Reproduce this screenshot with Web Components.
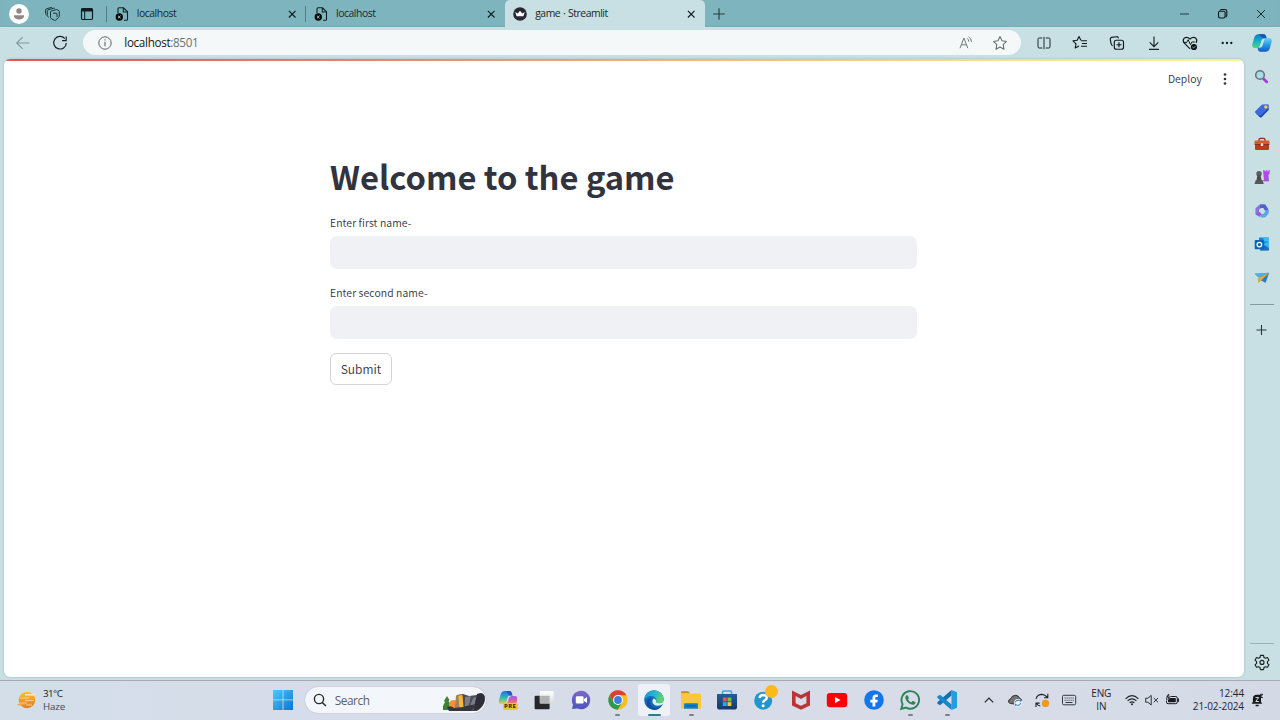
<!DOCTYPE html>
<html lang="en">
<head>
<meta charset="utf-8">
<title>game · Streamlit</title>
<style>
  html, body { margin: 0; height: 100%; overflow: hidden; }
  body { font-family: "Open Sans", "Noto Sans", sans-serif; color: #1b1b1b; }
</style>
</head>
<body>
<desktop-screen></desktop-screen>
<script>
const ICONS = {
  avatar: `<circle cx="10" cy="10" r="10" fill="#fdfdfd"/><circle cx="10" cy="7" r="2.7" fill="#8f8785"/><path d="M5 11.2h10v1.1c0 2-2.2 3.1-5 3.1s-5-1.1-5-3.1z" fill="#8f8785"/>`,
  spaces: `<g fill="none" stroke="#17363b" stroke-width="1" stroke-linejoin="round"><path d="M7.500 8.100q0-.8.700-1l4.800-1.500q.6-.2 1.200.1l1.600.9q.5.300.5.900v4.600q0 .6-.4 1l-3.300 3.100q-.6.500-1.200.1l-3.400-1.900q-.5-.3-.5-.9z"/><path d="M5.700 13.200l-.9-.6q-.5-.4-.5-1V6.900q0-.8.700-1l5.700-1.700q.7-.2 1.300.4M3.500 11l-.6-.5q-.3-.3-.3-.8V5.800q0-.7.700-.9L8 3.500q.6-.1 1.100.2M10 9.200h3.200q.8 0 .8.800v3"/></g>`,
  tabmenu: `<rect x="4.5" y="4.5" width="11" height="11" rx="1.2" fill="none" stroke="#0c1d20" stroke-width="1.2"/><path d="M4.5 4.5h11v3h-11z" fill="#0c1d20"/><path d="M7.7 7v8.5" stroke="#0c1d20"/>`,
  pageerr: `<path d="M6 9V4.800q0-1 1-1h4.500l4 4v7.400q0 1-1 1h-2.500" fill="none" stroke="#0d2226" stroke-width="1.1"/><path d="M11.300 4v4h4" fill="none" stroke="#0d2226" stroke-width="1.1"/><circle cx="7.300" cy="13" r="3.700" fill="#050708"/><path d="M6.100 11.800l2.400 2.400m0-2.400l-2.400 2.400" stroke="#b9d6da" stroke-width="1"/>`,
  crown: `<circle cx="10" cy="10" r="6.8" fill="#262733"/><path d="M5.2 8l2.5 1.6L10 6.8l2.3 2.8L14.8 8l-1.4 4.3H6.6z" fill="#fff"/>`,
  close: `<path d="M6.900 6.900l6.600 6.600m0-6.600l-6.600 6.600" stroke="#0e1c1f" stroke-width="1.15"/>`,
  winclose: `<path d="M6 6l8 8m0-8l-8 8" stroke="#172c30" stroke-width="1"/>`,
  min: `<path d="M6 10h9" stroke="#213f44"/>`,
  restore: `<rect x="5.500" y="7.200" width="6.600" height="6.800" rx="1.400" fill="none" stroke="#0b1517" stroke-width="1.100"/><path d="M7 6.700q.2-1.200 1.500-1.200h3.500q1.800 0 1.800 1.800v4q0 1.300-1.200 1.500" fill="none" stroke="#0b1517" stroke-width="1.100"/>`,
  plus: `<path d="M10 4.3v11.4M4.3 10h11.4" stroke="#203b40" stroke-width="1.1"/>`,
  plussm: `<path d="M9.5 5v10M4.500 10h10" stroke="#26383b" stroke-width="1.1"/>`,
  back: `<path d="M16.5 10H4m5.600-5.800L3.700 10l5.900 5.800" fill="none" stroke="#82989b" stroke-width="1.1"/>`,
  reload: `<path d="M14.8 5.6A6.3 6.3 0 1 0 16.3 10M16.2 3.6v4H12" fill="none" stroke="#1a2224" stroke-width="1.2"/>`,
  info: `<circle cx="10" cy="10" r="6.2" fill="none" stroke="#5b6668"/><path d="M10 8.8v4.5M10 6.3v1.3" stroke="#5b6668" stroke-width="1.1"/>`,
  read: `<path d="M4 15.2L7.900 5l3.900 10.200M5.400 11.800h5" fill="none" stroke="#70797b"/><path d="M11 5.300q1.800 1.200 1.800 3.400M12.600 3.900q2.900 1.700 2.900 5" fill="none" stroke="#70797b"/>`,
  star: `<path d="M10 3.6l2 4.2 4.5.6-3.3 3.2.8 4.6-4-2.2-4 2.200.8-4.600-3.300-3.200 4.500-.6z" fill="none" stroke="#646e70" stroke-width="1.05" stroke-linejoin="round"/>`,
  split: `<path d="M8.300 5H5.200Q4 5 4 6.200v7.600Q4 15 5.200 15h3.100M11.700 5h3.100Q16 5 16 6.200v7.600q0 1.200-1.200 1.200h-3.100M10 3.800v12.400" fill="none" stroke="#1d2b2e"/>`,
  favs: `<path d="M9 13l-3.800 2 .8-4.200-3-3 4.200-.6L9 3.600l1.900 3.600" fill="none" stroke="#101a1c" stroke-width="1.15" stroke-linejoin="round"/><path d="M11 7.700h6M12 10.500h5M11 13.300h6" stroke="#101a1c" stroke-width="1.1"/>`,
  collect: `<rect x="7.3" y="7.2" width="9.2" height="9" rx="2" fill="none" stroke="#101a1c" stroke-width="1.15"/><path d="M12 9.2v5M9.5 11.7h5M5.6 12.8Q4.3 12 4 10.4L3.3 6.3Q3 4.8 4.6 4.4L9.5 3.7q1.6-.2 2 1.6" fill="none" stroke="#101a1c" stroke-width="1.15"/>`,
  down: `<path d="M10 3.5v10M5.7 9.4L10 13.6l4.3-4.2M5 16.4h10" fill="none" stroke="#182326" stroke-width="1.15"/>`,
  heart: `<path d="M10 15.8L4.2 10Q2.4 7.5 4 5.4 6.8 3 10 6q3.2-3 6-.6 1.6 2.1 0 4.4" fill="none" stroke="#101a1c" stroke-width="1.15"/><path d="M3.300 9.500h3.400l1.500-2.800 2.200 5 1.500-2.700h3" fill="none" stroke="#101a1c"/><circle cx="13.900" cy="14" r="3.100" fill="#080d0e"/><path d="M12.400 14l1.100 1.100 2-2" fill="none" stroke="#c8dfe2" stroke-width=".8"/>`,
  more: `<g fill="#101718"><circle cx="5.7" cy="10" r="1.15"/><circle cx="10" cy="10" r="1.15"/><circle cx="14.3" cy="10" r="1.15"/></g>`,
  copilot: `<defs><linearGradient id="a" x2="0" y2="1"><stop stop-color="#1277c9"/><stop offset=".5" stop-color="#12b3c4"/><stop offset="1" stop-color="#4fd47c"/></linearGradient><linearGradient id="b" x2="0" y2="1"><stop stop-color="#6fd2f4"/><stop offset=".5" stop-color="#259be5"/><stop offset="1" stop-color="#1456c8"/></linearGradient></defs><path d="M6.2 1.2h5.6q1.6 0 2.2 2l.5 2h-2.3q-2 0-2.6 2L7.8 13q-.5 2-2.4 2H2.6Q-.2 15 .3 11.6L2.4 4q1-2.8 3.8-2.8z" fill="url(#a)"/><path d="M13.8 18.8H8.2q-1.6 0-2.2-2l-.5-2h2.3q2 0 2.6-2L12.2 7q.5-2 2.4-2h2.8q2.8 0 2.3 3.4L17.6 16q-1 2.8-3.8 2.8z" fill="url(#b)"/><path d="M6.5 1.2h5.3q1.6 0 2.2 2l.5 2H11z" fill="#1457b5"/>`,
  search3d: `<path d="M11.5 11.800l3.300 3.100" stroke="#a13be0" stroke-width="2.700" stroke-linecap="round"/><circle cx="8" cy="8" r="4.300" fill="#a9dce9" stroke="#66727c" stroke-width="1.600"/>`,
  tag: `<path d="M10 3.6l5.5-.4q1.3 0 1.3 1.3L16.5 9l-6.8 7q-1 .8-2 0L3.4 12q-.8-1 0-2z" fill="#3d6bdd"/><path d="M3.4 12l4.3 4q1 .8 2 0l6.8-7 .1-2-7.9 7.4q-1 .7-1.8 0z" fill="#2445a8"/><circle cx="13.8" cy="6" r="1.7" fill="#f4ca62"/>`,
  box: `<path d="M7 7V5.400Q7 4.400 8.400 4.400h3.200Q13 4.400 13 5.400V7" fill="none" stroke="#8d3320" stroke-width="1.300"/><rect x="2.500" y="6.500" width="15" height="5" rx="1.400" fill="#e1572d"/><path d="M3 10.500h14v4.300q0 1.200-1.200 1.200H4.200q-1.200 0-1.200-1.200z" fill="#b63c1e"/><path d="M2.800 10h14.400v1H2.800z" fill="#8f2e18"/><rect x="8.800" y="9.300" width="2.400" height="2.600" rx=".6" fill="#f6e4dc"/>`,
  chess: `<path d="M11 3.2h1.800v1.300h1V3.200h1.600v1.300h1V3.200H18l-.6 4-1 .6.500 5.200H12z" fill="#b04be6"/><circle cx="7" cy="6.800" r="2.700" fill="#5d5e60"/><path d="M5.500 8h3l1.200 6H4.300z" fill="#4a4b4d"/><path d="M3.800 13h6.600l1.400 4H2.500z" fill="#55575a"/><path d="M11 13.200h6v1.100h-5.600z" fill="#8c2fc5"/>`,
  m365: `<g fill="none" stroke-width="3.600" stroke-linejoin="round"><path d="M8.300 14.300L5.200 12.400V8L8.600 5.100" stroke="#8a72e0"/><path d="M8 5.100h4.300L15 9.500" stroke="#4f63c9"/><path d="M15 9v2.500l-2.600 3.200H8.500" stroke="#58a6e6"/><path d="M5.300 11.500l3.200 2.800" stroke="#9a5bd2"/></g>`,
  outlook: `<path d="M7 3.500h9.500v9H7z" fill="#1587d6"/><path d="M11.500 3.500h5v4h-5z" fill="#3bbcf4"/><path d="M7 10.500l10-2.600v7.600q0 1-1 1H8z" fill="#47b3ec"/><path d="M8 16.500h8q1 0 1-1V14l-5.500-3.200z" fill="#1970bd"/><rect x="2.700" y="6" width="9.500" height="9.300" rx="1" fill="#0b64b2"/><circle cx="7.400" cy="10.600" r="2.300" fill="none" stroke="#fff" stroke-width="1.300"/>`,
  plane: `<path d="M2.700 5.800L17 4.800l-7.200 6.700z" fill="#3c90cf"/><path d="M2.700 5.800L17 4.800 6.300 9.500z" fill="#54aede"/><path d="M17 4.800L5.800 10.300l.4 5 3-2.700 4.400 2.200z" fill="#e4a93b"/><path d="M17 4.800l-7.800 7.700 4.400 2.300z" fill="#277ebf"/>`,
  gear: `<path d="M8.500 3.400h3l.5 2.100 1.400.8 2.100-.7 1.500 2.600-1.600 1.400v1.700l1.600 1.500-1.500 2.500-2.100-.6-1.400.8-.5 2.100h-3L8 15.500l-1.400-.8-2.100.6L3 12.800l1.600-1.500V9.600L3 8.200l1.500-2.600 2.100.7L8 5.500z" fill="none" stroke="#182022" stroke-width="1.1" stroke-linejoin="round"/><circle cx="10" cy="10.400" r="2" fill="none" stroke="#182022" stroke-width="1.1"/>`,
  kebab: `<g fill="#31333f"><circle cx="10" cy="5.500" r="1.350"/><circle cx="10" cy="10" r="1.350"/><circle cx="10" cy="14.500" r="1.350"/></g>`,
  haze: `<defs><linearGradient id="a" x2="0" y2="1"><stop stop-color="#fdc426"/><stop offset="1" stop-color="#e4781d"/></linearGradient></defs><circle cx="10" cy="10" r="8.300" fill="url(#a)"/><path d="M8 4.800h10" stroke="#f6e6b8" stroke-width="1.600"/><path d="M3 8h9M8 10.500h9M2.500 13h7.500M9 15h6" stroke="#fbe3a6" stroke-width=".8"/><path d="M.5 14.700H8" stroke="#eea53b" stroke-width="1.200"/>`,
  start: `<defs><linearGradient id="a" x2="1" y2="1"><stop stop-color="#4ecbf8"/><stop offset="1" stop-color="#0874d5"/></linearGradient></defs><path d="M0 0h9.600v9.500H0zM10.400 0H20v9.500h-9.600zM0 10.300h9.600V20H0zM10.400 10.300H20V20h-9.600z" fill="url(#a)"/>`,
  find: `<circle cx="9" cy="9" r="4.600" fill="none" stroke="#262a31" stroke-width="1.400"/><path d="M12.300 12.400l3.600 3.700" stroke="#262a31" stroke-width="1.500"/>`,
  pre: `<defs><linearGradient id="a" x2="0" y2="1"><stop stop-color="#2872dd"/><stop offset=".5" stop-color="#2ab7bd"/><stop offset="1" stop-color="#e8cf43"/></linearGradient><linearGradient id="b" x2="0" y2="1"><stop stop-color="#9b63e8"/><stop offset=".5" stop-color="#e45ca2"/><stop offset="1" stop-color="#f39b55"/></linearGradient></defs><path d="M6.300 1h5q2 0 2.600 2.400l.6 2H12q-1.800 0-2.400 2l-1.200 4Q7.800 14 5.600 14H2.800Q0 14 .8 11L2.900 3.600Q3.700 1 6.300 1z" fill="url(#a)"/><path d="M7 14q2 0 2.700-2L11 8q.7-2 2.600-2h3.200q3 0 2.400 3l-1 6H8z" fill="url(#b)"/><path d="M8 1h3.300q2 0 2.600 2.400l.6 2h-3.200z" fill="#2756c8"/>`,
  taskview: `<defs><linearGradient id="a" x2="0" y2="1"><stop stop-color="#fff"/><stop offset="1" stop-color="#d7dbe2"/></linearGradient></defs><rect x=".6" y="5.800" width="15" height="13.500" rx="1" fill="#252729"/><rect x="5.800" y="1" width="14" height="12.500" rx="1" fill="url(#a)"/><path d="M5.800 5.800h9.800v7.700H5.800z" fill="#b2b3b5"/>`,
  chat: `<defs><linearGradient id="a" x2="0" y2="1"><stop stop-color="#7d68c8"/><stop offset="1" stop-color="#4b55bd"/></linearGradient></defs><path d="M1 19l1-4.500A9.200 9.200 0 1 1 6.500 18.500z" fill="url(#a)"/><rect x="4.800" y="6.300" width="7.800" height="7.300" rx="1.300" fill="#fff"/><path d="M13 9l3-2v6l-3-2z" fill="#fff"/>`,
  chrome: `<circle cx="10" cy="10" r="9.700" fill="#f5bf22"/><path d="M1.600 5.150A9.700 9.700 0 0 1 18.400 5.150H10L5.800 12.400z" fill="#d94235"/><path d="M1.600 5.150A9.700 9.700 0 0 0 9.600 19.700L14.200 12.500 10 14.800 5.800 12.400z" fill="#2c9a50"/><circle cx="10" cy="10" r="4.900" fill="#fff"/><circle cx="10" cy="10" r="3.900" fill="#3c7de4"/>`,
  edge: `<defs><linearGradient id="a" x1="0" x2="1" y2=".3"><stop stop-color="#1b91d6"/><stop offset=".55" stop-color="#25b6d0"/><stop offset="1" stop-color="#60d266"/></linearGradient></defs><circle cx="10" cy="10" r="9.800" fill="#116abd"/><path d="M.3 9A9.800 9.800 0 0 1 19.800 9q.2 4-4.600 4.300-4 0-3.300-1.700.8-1 .3-2.600Q11 6.300 7.500 6 2.600 6 .3 10z" fill="url(#a)"/><path d="M7.700 8Q4 12.500 8 16.500q4 3 9.400-.5-4 5.500-10 3.200Q1 16.300 3 10.800 4.500 8 7.700 8z" fill="#174f96"/><path d="M9.800 8.300Q7.500 11 9 13.500q2.500 3.500 8.200 1.500l3-1.700-.2-2.600q-1.300 2.600-4.800 2.600-4 0-3.300-1.700 1-1.500-2.100-3.300z" fill="#d9f1f8"/>`,
  folder: `<path d="M0 2q0-.8.800-.8h6q.8 0 1.300.8L9 3.600H0z" fill="#c98c14"/><path d="M0 4.500V3.400h19.200q.8 0 .8.800v13.600q0 .9-1 .9H1q-1 0-1-1z" fill="#fac73f"/><path d="M3 18.700v-4.500q0-1 1-1h12q1 0 1 1v4.500z" fill="#1480c7"/><path d="M5.300 15.500h9.400v1H5.300z" fill="#075d96"/>`,
  store: `<defs><linearGradient id="a" x2="0" y2="1"><stop stop-color="#1e5f9f"/><stop offset="1" stop-color="#173767"/></linearGradient></defs><path d="M5.500 4V2q0-1 1-1h7q1 0 1 1v2" fill="none" stroke="#3aa9df" stroke-width="1.500"/><path d="M0 4h20v13q0 2.600-2.600 2.600H2.600Q0 19.600 0 17z" fill="url(#a)"/><path d="M5.800 7.500h3.900v3.900H5.800z" fill="#ef5838"/><path d="M10.500 7.500h3.900v3.900h-3.900z" fill="#84bd35"/><path d="M5.800 12.100h3.900V16H5.800z" fill="#29a8e8"/><path d="M10.500 12.100h3.900V16h-3.900z" fill="#f8c332"/>`,
  help: `<circle cx="9.200" cy="10.700" r="9" fill="#2295cb"/><path d="M5.600 8.100q.2-3.100 3.700-3.100 3.700.2 3.400 3-.2 1.700-2.300 2.600-1.200.7-1.200 2.200" fill="none" stroke="#fff" stroke-width="2.400"/><circle cx="9.100" cy="15.800" r="1.500" fill="#fff"/>`,
  mcafee: `<path d="M1 .5L10 5l9-4.500v15L10 19.700 1 15.500zM4.600 6v7.300l5.400 2.500 5.400-2.500V6L10 8.900z" fill="#b93635" fill-rule="evenodd"/>`,
  youtube: `<rect x="-.2" y="3" width="20.400" height="14.300" rx="3.200" fill="#fa0305"/><path d="M8 7l5.500 3.100L8 13.300z" fill="#fff"/>`,
  facebook: `<circle cx="10" cy="10" r="9.800" fill="#1476ef"/><path d="M8.500 16.500v-4H6.300V9.700h2.200V8q0-3.600 3.300-3.600l2.100.2V7h-1.300q-1.300 0-1.300 1.300v1.400h2.500l-.5 2.800h-2v4z" fill="#fff"/>`,
  whatsapp: `<path d="M1.200 18.900l1.400-4.700A8.800 8.800 0 1 1 6 17.600z" fill="none" stroke="#2d8357" stroke-width="1.900"/><path d="M6.200 5.600q.9-1 1.700.1l.9 2q.1.600-.8 1.500 1 2.200 3.300 3.200l1-1.200q.4-.4.900-.1l2 1q.5.300.2 1.100-.7 1.800-2.600 1.600-5.800-1-7.500-6.700-.1-1.400.9-2.500z" fill="#2d8357"/>`,
  vscode: `<path d="M14.500 0L20 2.300v15.400L14.500 20z" fill="#279cdf"/><path d="M14.500 0v5.500L3 15.300.3 13.600v-1.300z" fill="#1270b2"/><path d="M14.500 20v-5.500L3 4.700.3 6.400v1.300z" fill="#1687cb"/>`,
  chevron: `<path d="M5.800 12.300L10 8l4.200 4.300" fill="none" stroke="#20242a" stroke-width="1.200"/>`,
  cloud: `<path d="M5.800 13.500q-2.500-.3-2.300-2.500.3-1.700 1.900-2Q7 5.200 10.800 5.300q2.800.2 3.800 2.900 1.500.4 2 2.200L9 14z" fill="#747474" stroke="#303030"/><circle cx="13" cy="12.800" r="3.900" fill="#eaf3fa"/><path d="M10.200 12.500q.7-2.400 3-2.300 1.300.1 2.200 1.300V9.800m.4 3.300q-.7 2.400-3 2.300-1.300-.1-2.200-1.300v1.700" fill="none" stroke="#2776ad" stroke-width="1"/>`,
  sync: `<path d="M4 8.800Q5.200 4.400 10 4.400q3.300.2 5.200 3M15.800 3.800v3.900h-3.700M8.300 16q-2.500-.5-4-2.700M4 17v-3.900h3.700" fill="none" stroke="#1f2328" stroke-width="1.100"/><circle cx="13.500" cy="13.400" r="3.700" fill="#f29820"/>`,
  keyboard: `<rect x="3.500" y="5.300" width="13.200" height="9.500" rx="1.300" fill="none" stroke="#343a43"/><path d="M5.600 8h9.200M5.600 10.200h9.200" stroke="#343a43" stroke-width="1.100" stroke-dasharray="1.100 .9"/><path d="M6.500 12.500h7" stroke="#343a43"/>`,
  wifi: `<g fill="none" stroke="#20252b" stroke-width="1.150"><path d="M3.600 8.800q6.400-6.200 12.800 0M5.600 10.900q4.400-4.200 8.800 0M7.600 12.900q2.400-2.200 4.800 0"/></g><circle cx="10" cy="14.200" r="1" fill="#20252b"/>`,
  mute: `<path d="M3.700 8.200h2.200l3.300-2.800v9.600l-3.300-2.800H3.700z" fill="none" stroke="#2b3036"/><path d="M11.700 8l4.300 4.300m0-4.300l-4.300 4.300" stroke="#2b3036"/>`,
  battery: `<rect x="4.500" y="6.500" width="10.800" height="7.200" rx="1.600" fill="none" stroke="#181b1e"/><rect x="6" y="8" width="7.800" height="4.200" rx=".6" fill="#181b1e"/><path d="M16.400 8.500v3.200" stroke="#181b1e" stroke-width="1.200"/><path d="M5.800 3.900L3.700 7.800h2L4.500 11 8.800 6.700H6.600L8 3.900z" fill="#181b1e" stroke="#d5dbe6" stroke-width=".6"/>`,
  bell: `<path d="M4.700 13.800l1.200-2V8.300Q6 4.800 9.800 4.700h4.200v7.100l1.200 2z" fill="#17191c"/><path d="M8.600 15.500h3" stroke="#17191c" stroke-width="1.500"/><path d="M8.500 7.500h3.200l-3 4h3.200" fill="none" stroke="#d5dae2"/><path d="M13.200 4.300h2.500l-2.500 3.200h2.600" fill="none" stroke="#17191c"/>`,
  scene: `<path d="M4 3l2.500 4-1 1 2.500 4v5H0v-4l2-4-1-1z" fill="#3f8131"/><path d="M6 12q0-5 5-5t5 5v6H6z" fill="#f4903b"/><path d="M14 2l6-1 6 2 8-1 4-2q4 0 4 7-1 7-8 11H12z" fill="#4b4c57"/><path d="M13 2.500l6-1v14l-7 2z" fill="#a5805a"/><path d="M15.500 3l4-1 1 13-4 2z" fill="#f5b93a"/><path d="M22 4l6-1-2 9-4 2zM30 5l5-2-2 7-6 3z" fill="#7b7c88"/><path d="M34 1q5-2 7.500 2 1 8-5.500 13l-5 1.500Q32 8 34 1z" fill="#2c2d37"/><path d="M4 14q4-2 7 1l9-1 8-2 4 1-4 5H6z" fill="#34353d"/>`
};

const define = (name, html, setup) => {
  const template = document.createElement('template');
  template.innerHTML = html;
  customElements.define(name, class extends HTMLElement {
    constructor() {
      super();
      this.attachShadow({ mode: 'open' }).append(template.content.cloneNode(true));
    }
    connectedCallback() { if (setup) setup(this, this.shadowRoot); }
  });
};

define('ui-icon', `<style>
  :host { display: block; flex: none; width: var(--s, 20px); height: var(--s, 20px); }
  svg { display: block; width: 100%; height: 100%; overflow: visible; }
</style><div></div>`, (el, root) => {
  const box = root.querySelector('div');
  box.style.height = '100%';
  const wide = el.getAttribute('name') === 'scene';
  box.innerHTML = `<svg viewBox="0 0 ${wide ? '42 19' : '20 20'}">${ICONS[el.getAttribute('name')] || ''}</svg>`;
});

define('icon-cell', `<style>
  :host { display: flex; flex: none; align-items: center; justify-content: center; width: var(--cell, 36.65px); }
</style><slot></slot>`);

define('browser-tab', `<style>
  :host { display: flex; flex: none; align-items: center; box-sizing: border-box; width: 199.2px; height: 27px;
    padding: 0 4px 0 4.500px; font-size: 10.400px; letter-spacing: -.45px; color: #152a2e; position: relative; }
  :host([divided])::before { content: ""; position: absolute; left: -1px; top: 6px; width: 1px; height: 16px; background: #4c7f87; }
  :host([active]) { background: #c8dfe3; border-radius: 5px 5px 0 0; color: #1c2527; word-spacing: .5px; }
  span { flex: 1; padding-left: 5.300px; line-height: 27px; }
</style><ui-icon></ui-icon><span><slot></slot></span><ui-icon name="close"></ui-icon>`, (el, root) => {
  const icon = root.querySelector('ui-icon');
  icon.setAttribute('name', el.getAttribute('icon'));
  icon.replaceWith(icon.cloneNode());
});

define('tab-strip', `<style>
  :host { display: flex; align-items: center; height: 27px; flex: none; background: #7eb4bd; box-shadow: inset 0 -1px 1px #6fa5ae66; }
  .lead { display: flex; width: 107px; }
  .fill { flex: 1; }
  icon-cell { --cell: 38.3px; }
  .lead icon-cell:nth-child(1) { --cell: 37px; }
  .lead icon-cell:nth-child(2) { --cell: 31px; }
  .lead icon-cell:nth-child(3) { --cell: 37px; }
  .add { --cell: 28px; }
</style>
<div class="lead"><icon-cell><ui-icon name="avatar"></ui-icon></icon-cell><icon-cell><ui-icon name="spaces"></ui-icon></icon-cell><icon-cell><ui-icon name="tabmenu"></ui-icon></icon-cell></div>
<browser-tab icon="pageerr" divided>localhost</browser-tab>
<browser-tab icon="pageerr" divided>localhost</browser-tab>
<browser-tab icon="crown" active>game · Streamlit</browser-tab>
<icon-cell class="add"><ui-icon name="plus"></ui-icon></icon-cell>
<div class="fill"></div>
<icon-cell><ui-icon name="min"></ui-icon></icon-cell><icon-cell><ui-icon name="restore"></ui-icon></icon-cell><icon-cell><ui-icon name="winclose"></ui-icon></icon-cell>`);

define('address-bar', `<style>
  :host { display: flex; align-items: center; flex: 1; height: 25px; margin: 0 4px 0 5px; border-radius: 13px; background: #f4f8f9;
    font-size: 11.7px; letter-spacing: -.33px; color: #15191a; }
  p { flex: 1; margin: 0; padding-left: 9px; line-height: 24px; height: 25px; }
  p span { color: #6b7172; }
  .info { margin-left: 12px; }
  icon-cell { --cell: 33.4px; }
  .end { display: flex; padding-right: 5px; }
</style><ui-icon class="info" name="info"></ui-icon><p>localhost<span>:8501</span></p>
<div class="end"><icon-cell><ui-icon name="read"></ui-icon></icon-cell><icon-cell><ui-icon name="star"></ui-icon></icon-cell></div>`);

define('nav-bar', `<style>
  :host { display: flex; align-items: center; box-sizing: border-box; height: 32px; flex: none; padding: 0 0 1px 5px; margin-right: -1.200px; }
</style>
<icon-cell><ui-icon name="back"></ui-icon></icon-cell><icon-cell><ui-icon name="reload"></ui-icon></icon-cell>
<address-bar></address-bar>
<icon-cell><ui-icon name="split"></ui-icon></icon-cell><icon-cell><ui-icon name="favs"></ui-icon></icon-cell><icon-cell><ui-icon name="collect"></ui-icon></icon-cell><icon-cell><ui-icon name="down"></ui-icon></icon-cell><icon-cell><ui-icon name="heart"></ui-icon></icon-cell><icon-cell><ui-icon name="more"></ui-icon></icon-cell>`);

define('side-bar', `<style>
  :host { display: flex; flex-direction: column; align-items: center; width: 36px; flex: none; box-sizing: border-box; padding: 6px 0 8px; }
  icon-cell { width: 36px; height: 33.4px; }
  .copilot { height: 20px; margin-bottom: 7.500px; }
  hr { width: 24px; height: 1px; border: 0; margin: 0; background: #9fb1b4; flex: none; }
  .first { margin-top: 9.500px; background: #869a9d; }
  .plus { height: 20px; margin-top: 15.500px; }
  .gap { flex: 1; }
  .gear { height: 20px; margin-top: 8px; }
</style>
<icon-cell class="copilot"><ui-icon name="copilot"></ui-icon></icon-cell>
<icon-cell><ui-icon name="search3d"></ui-icon></icon-cell><icon-cell><ui-icon name="tag"></ui-icon></icon-cell><icon-cell><ui-icon name="box"></ui-icon></icon-cell><icon-cell><ui-icon name="chess"></ui-icon></icon-cell><icon-cell><ui-icon name="m365"></ui-icon></icon-cell><icon-cell><ui-icon name="outlook"></ui-icon></icon-cell><icon-cell><ui-icon name="plane"></ui-icon></icon-cell>
<hr class="first"><icon-cell class="plus"><ui-icon name="plussm"></ui-icon></icon-cell>
<div class="gap"></div><hr><icon-cell class="gear"><ui-icon name="gear"></ui-icon></icon-cell>`);

define('text-field', `<style>
  :host { display: block; }
  label { display: block; height: 20px; line-height: 20px; font-size: 10.4px; letter-spacing: .1px; margin-bottom: 3px; }
  input { display: block; box-sizing: border-box; width: 100%; height: 33.400px; margin-bottom: -.4px; border: 0; border-radius: 7px; background: #f0f1f5; padding: 0 10px; outline: 0; }
</style><label><slot></slot></label><input type="text">`);

define('submit-button', `<style>
  :host { display: block; }
  button { box-sizing: border-box; display: block; width: 62px; height: 32px; padding: 0 0 1px; border: 1px solid #d3d4d8; border-radius: 6px; background: #fff; color: inherit; font: inherit; font-size: 12px; letter-spacing: .05px; line-height: 29px; }
</style><button><slot></slot></button>`);

define('streamlit-page', `<style>
  :host { display: flex; flex-direction: column; flex: 1; margin: 0 .500px 3px 3.500px; border-radius: 6px; overflow: hidden; background: #fff;
    color: #31333f; font-family: "Noto Sans CJK SC", "Noto Sans", sans-serif; font-weight: 350; box-shadow: 0 0 2px #8fabb0; }
  .stripe { height: 2px; flex: none; background: linear-gradient(90deg, #e0555a, #e2886f 30%, #efba7c 57%, #f3df8c 80%, #f0f59a); }
  header { display: flex; justify-content: flex-end; align-items: center; height: 36px; font-size: 10.4px; letter-spacing: .08px; }
  header icon-cell { --cell: 37px; margin-left: 4.500px; }
  header span { line-height: 36px; }
  main { width: 587px; margin: 54.500px 0 0 326.500px; }
  h1 { margin: 0; height: 48px; line-height: 48px; font-size: 32.700px; font-weight: 700; white-space: nowrap; }
  .one { margin-top: 13.500px; } .two { margin-top: 14px; }
  submit-button { margin-top: 14px; }
</style>
<div class="stripe"></div>
<header><span>Deploy</span><icon-cell><ui-icon name="kebab"></ui-icon></icon-cell></header>
<main><h1>Welcome to the game</h1>
<text-field class="one">Enter first name-</text-field><text-field class="two">Enter second name-</text-field>
<submit-button>Submit</submit-button></main>`);

define('task-app', `<style>
  :host { display: flex; flex: none; align-items: center; justify-content: center; position: relative; width: 36.6px; height: 39px; --s: 20px; }
  .tile { display: flex; align-items: center; justify-content: center; width: 32px; height: 32px; border-radius: 3px; }
  :host([active]) .tile { background: #eef2f8; }
  :host([open])::after, :host([active])::after { content: ""; position: absolute; bottom: 3px; width: 5px; height: 2.500px; border-radius: 2px; background: #7e8288; left: 16px; }
  :host([active])::after { width: 13px; left: 12px; background: #2d7d8b; }
  ::slotted(b) { position: absolute; left: 13px; top: 23px; width: 15px; height: 7px; font: 700 6px/7px "Open Sans", sans-serif; text-align: center; background: #f3c52c; color: #29210a; border-radius: 2px; letter-spacing: .3px; }
  ::slotted(i) { position: absolute; left: 19px; top: 5px; width: 13px; height: 13px; border-radius: 50%; background: #fbb91c; }
</style><div class="tile"><ui-icon></ui-icon></div><slot></slot>`, (el, root) => {
  const icon = root.querySelector('ui-icon');
  icon.setAttribute('name', el.getAttribute('icon'));
  icon.replaceWith(icon.cloneNode());
});

define('search-box', `<style>
  :host { display: flex; align-items: center; box-sizing: border-box; width: 181px; height: 26px; margin-left: 3px; border-radius: 13px; background: #f3f6fa; box-shadow: 0 0 1px #8b93a3; font-size: 11.800px; color: #5b5f66; letter-spacing: -.45px; overflow: hidden; padding-left: 5.500px; }
  span { flex: 1; padding-left: 4.700px; line-height: 26px; }
  .scene { width: 42px; height: 19px; margin: 5px 1px 0 0; }
</style><ui-icon name="find"></ui-icon><span>Search</span><ui-icon class="scene" name="scene"></ui-icon>`);

define('weather-chip', `<style>
  :host { display: flex; align-items: center; width: 248px; font-size: 9.800px; line-height: 13px; letter-spacing: -.2px; }
  div { padding-left: 6px; }
  span { display: block; }
  .t { letter-spacing: -.55px; }
  .c { color: #454a53; }
</style><ui-icon name="haze"></ui-icon><div><span class="t">31°C</span><span class="c">Haze</span></div>`);

define('system-tray', `<style>
  :host { display: flex; align-items: center; font-size: 10px; line-height: 13px; letter-spacing: -.1px; color: #22262c; }
  icon-cell { --cell: 26.700px; }
  .net { --cell: 20px; }
  .lang { width: 40px; padding-right: 1.500px; box-sizing: border-box; text-align: center; }
  .time { width: 62px; text-align: right; white-space: nowrap; }
  .bell { --cell: 26px; }
  span { display: block; }
</style>
<icon-cell><ui-icon name="chevron"></ui-icon></icon-cell><icon-cell><ui-icon name="cloud"></ui-icon></icon-cell><icon-cell><ui-icon name="sync"></ui-icon></icon-cell><icon-cell><ui-icon name="keyboard"></ui-icon></icon-cell>
<div class="lang"><span>ENG</span><span>IN</span></div>
<icon-cell class="net"><ui-icon name="wifi"></ui-icon></icon-cell><icon-cell class="net"><ui-icon name="mute"></ui-icon></icon-cell><icon-cell class="net"><ui-icon name="battery"></ui-icon></icon-cell>
<div class="time"><span>12:44</span><span>21-02-2024</span></div>
<icon-cell class="bell"><ui-icon name="bell"></ui-icon></icon-cell>`);

define('task-bar', `<style>
  :host { display: flex; align-items: center; box-sizing: border-box; height: 40px; flex: none; padding: 0 10px 1.500px 17px; border-top: 1px solid #a9a9b5; background: linear-gradient(90deg, #d3dee9, #d7dce9 30%, #d7dce8 80%, #d3dae6); }
  .apps { display: flex; margin-left: 4px; }
  .fill { flex: 1; }
</style>
<weather-chip></weather-chip><task-app icon="start"></task-app><search-box></search-box>
<div class="apps">
<task-app icon="pre"><b>PRE</b></task-app><task-app icon="taskview"></task-app><task-app icon="chat"></task-app><task-app icon="chrome" open></task-app><task-app icon="edge" active></task-app><task-app icon="folder" open></task-app><task-app icon="store"></task-app><task-app icon="help"><i></i></task-app><task-app icon="mcafee"></task-app><task-app icon="youtube"></task-app><task-app icon="facebook"></task-app><task-app icon="whatsapp" open></task-app><task-app icon="vscode" open></task-app>
</div>
<div class="fill"></div><system-tray></system-tray>`);

define('desktop-screen', `<style>
  :host { display: flex; flex-direction: column; width: 1280px; height: 720px; background: #c8dfe3; overflow: hidden; }
  .body { display: flex; flex: 1; min-height: 0; }
  .view { display: flex; flex-direction: column; width: 1244px; }
</style><tab-strip></tab-strip><div class="body"><div class="view"><nav-bar></nav-bar><streamlit-page></streamlit-page></div><side-bar></side-bar></div><task-bar></task-bar>`);
</script>
</body>
</html>
